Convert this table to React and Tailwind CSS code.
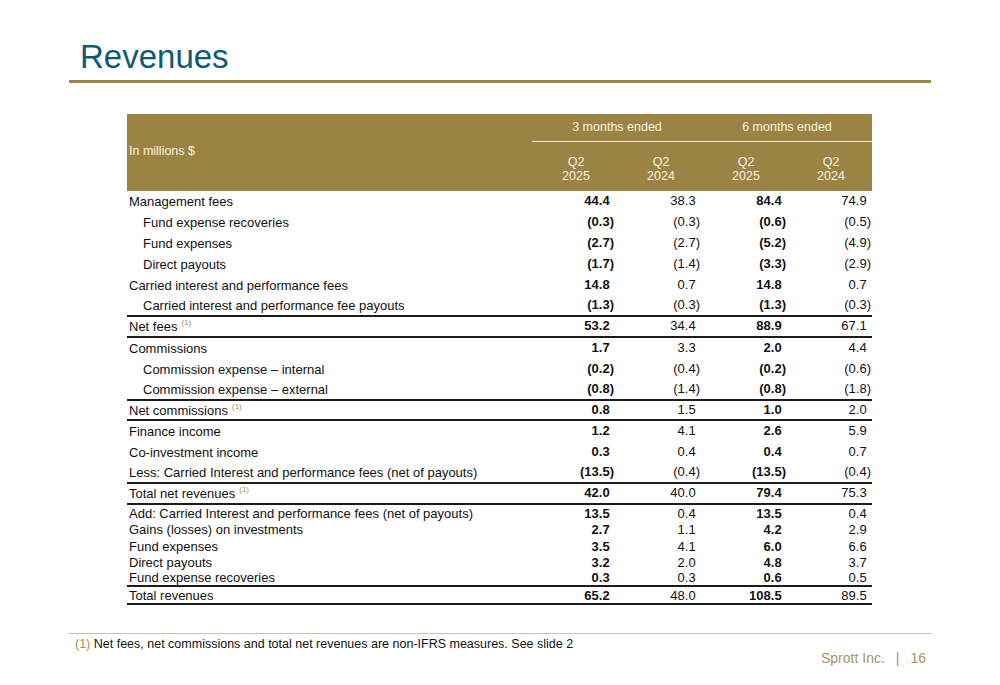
import React from "react";

const FONT = { fontFamily: '"Liberation Sans", Arial, sans-serif' };

const upper = [
  { l: "Management fees", v: ["44.4", "38.3", "84.4", "74.9"] },
  { l: "Fund expense recoveries", i: true, v: ["(0.3)", "(0.3)", "(0.6)", "(0.5)"] },
  { l: "Fund expenses", i: true, v: ["(2.7)", "(2.7)", "(5.2)", "(4.9)"] },
  { l: "Direct payouts", i: true, v: ["(1.7)", "(1.4)", "(3.3)", "(2.9)"] },
  { l: "Carried interest and performance fees", v: ["14.8", "0.7", "14.8", "0.7"] },
  { l: "Carried interest and performance fee payouts", i: true, v: ["(1.3)", "(0.3)", "(1.3)", "(0.3)"], b: true },
  { l: "Net fees", s: true, v: ["53.2", "34.4", "88.9", "67.1"], b: true },
  { l: "Commissions", v: ["1.7", "3.3", "2.0", "4.4"] },
  { l: "Commission expense \u2013 internal", i: true, v: ["(0.2)", "(0.4)", "(0.2)", "(0.6)"] },
  { l: "Commission expense \u2013 external", i: true, v: ["(0.8)", "(1.4)", "(0.8)", "(1.8)"], b: true },
  { l: "Net commissions", s: true, v: ["0.8", "1.5", "1.0", "2.0"], b: true, h: 20 },
  { l: "Finance income", v: ["1.2", "4.1", "2.6", "5.9"] },
  { l: "Co-investment income", v: ["0.3", "0.4", "0.4", "0.7"] },
  { l: "Less: Carried Interest and performance fees (net of payouts)", v: ["(13.5)", "(0.4)", "(13.5)", "(0.4)"], b: true },
  { l: "Total net revenues", s: true, v: ["42.0", "40.0", "79.4", "75.3"], b: true },
];

const lower = [
  { l: "Add: Carried Interest and performance fees (net of payouts)", v: ["13.5", "0.4", "13.5", "0.4"] },
  { l: "Gains (losses) on investments", v: ["2.7", "1.1", "4.2", "2.9"], h: 17 },
  { l: "Fund expenses", v: ["3.5", "4.1", "6.0", "6.6"] },
  { l: "Direct payouts", v: ["3.2", "2.0", "4.8", "3.7"] },
  { l: "Fund expense recoveries", v: ["0.3", "0.3", "0.6", "0.5"], b: true, h: 17 },
  { l: "Total revenues", v: ["65.2", "48.0", "108.5", "89.5"], b: true, h: 18 },
];

const colPad = ["pr-[3px]", "pr-[2px]", "pr-[1px]", "pr-[1px]"];

function Num({ v, bold, col, lift }) {
  const paren = v.startsWith("(");
  return (
    <div
      className={
        "flex items-center justify-end " +
        colPad[col] +
        (bold ? " font-bold" : "") +
        (lift ? " pb-[2px]" : "")
      }
    >
      <span>{v}</span>
      {!paren && <span className="invisible">)</span>}
    </div>
  );
}

function Row({ r, compact }) {
  const h = r.h ? r.h : compact ? 16 : 21;
  return (
    <div
      className={
        "grid grid-cols-[405px_85px_85px_85px_85px] box-border leading-[15px]" +
        (r.b ? " border-b-2 border-[#1c1c1c]" : "")
      }
      style={{ height: h }}
    >
      <div className={"flex items-center " + (r.i ? "pl-[16px]" : "pl-[2px]")}>
        <span>{r.l}</span>
        {r.s && (
          <span className="text-[8px] text-[#a8904f] ml-[4px] self-start mt-[2px] leading-none">
            (1)
          </span>
        )}
      </div>
      {r.v.map((v, k) => (
        <Num key={k} v={v} col={k} bold={k === 0 || k === 2} lift={!compact} />
      ))}
    </div>
  );
}

export default function App() {
  return (
    <div className="w-[1000px] h-[685px] bg-white flex flex-col overflow-hidden" style={FONT}>
      <div className="mt-[41px] ml-[80px] h-[32px] text-[33px] leading-[32px] text-[#0c5a74]">
        Revenues
      </div>
      <div className="mt-[7px] ml-[69px] w-[862px] h-[3px] bg-[#9c8545]" />

      <div className="mt-[31px] ml-[127px] w-[745px] text-[13px] text-[#111]">
        <div className="flex h-[77px] bg-[#9b8443] text-[#f6f2e9] text-[12.5px]">
          <div className="w-[405px] flex items-center pl-[2px] pb-[2px]">In millions $</div>
          <div className="w-[340px] flex flex-col">
            <div className="h-[28px] grid grid-cols-2 border-b border-[#efe8d8]">
              <div className="flex items-center justify-center">3 months ended</div>
              <div className="flex items-center justify-center">6 months ended</div>
            </div>
            <div className="flex-1 grid grid-cols-4 pt-[4px]">
              {["2025", "2024", "2025", "2024"].map((y, k) => (
                <div key={k} className="flex flex-col items-center justify-center leading-[14px] pl-[3px]">
                  <span>Q2</span>
                  <span>{y}</span>
                </div>
              ))}
            </div>
          </div>
        </div>
        {upper.map((r, k) => (
          <Row key={k} r={r} />
        ))}
        {lower.map((r, k) => (
          <Row key={k} r={r} compact />
        ))}
      </div>

      <div className="mt-[28px] ml-[69px] w-[863px] h-px bg-[#cdc3a6]" />
      <div className="ml-[75px] mt-[3px] text-[12.5px] leading-[14px] text-[#111]">
        <span className="text-[#a8904f]">(1)</span> Net fees, net commissions and total net revenues are non-IFRS measures. See slide 2
      </div>
      <div className="ml-[821px] -mt-px text-[14px] leading-[16px] text-[#a89462] flex">
        <span>Sprott Inc.</span>
        <span className="ml-[11px]">|</span>
        <span className="ml-[11px]">16</span>
      </div>
    </div>
  );
}
